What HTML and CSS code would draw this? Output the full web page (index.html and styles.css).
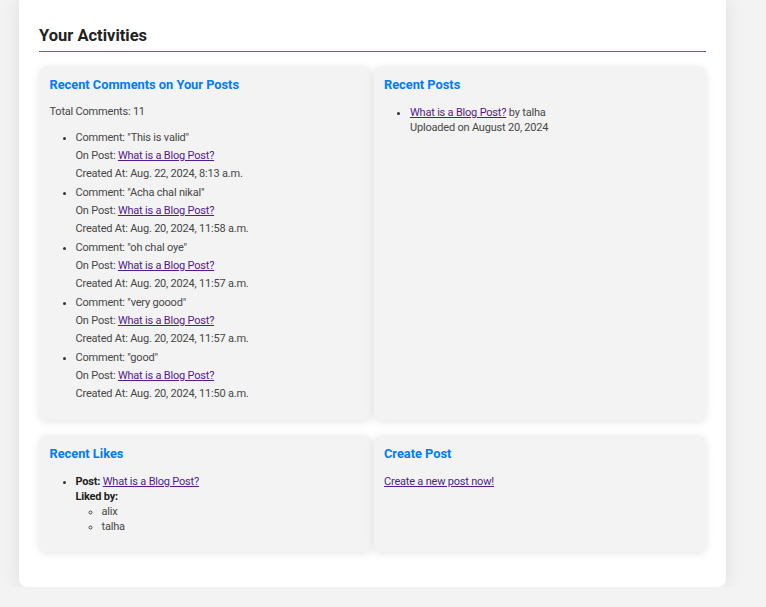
FILE: index.html
```html
<!DOCTYPE html>
<html lang="en">
<head>
<meta charset="utf-8">
<title>Your Activities</title>
<link rel="stylesheet" href="styles.css">
</head>
<body>
<main class="container">
  <h2 class="section-title">Your Activities</h2>
  <div class="activity-grid">
    <section class="card">
      <h3>Recent Comments on Your Posts</h3>
      <p class="total">Total Comments: 11</p>
      <ul class="comments">
        <li>Comment: "This is valid"<br>On Post: <a href="#">What is a Blog Post?</a><br>Created At: Aug. 22, 2024, 8:13 a.m.</li>
        <li>Comment: "Acha chal nikal"<br>On Post: <a href="#">What is a Blog Post?</a><br>Created At: Aug. 20, 2024, 11:58 a.m.</li>
        <li>Comment: "oh chal oye"<br>On Post: <a href="#">What is a Blog Post?</a><br>Created At: Aug. 20, 2024, 11:57 a.m.</li>
        <li>Comment: "very goood"<br>On Post: <a href="#">What is a Blog Post?</a><br>Created At: Aug. 20, 2024, 11:57 a.m.</li>
        <li>Comment: "good"<br>On Post: <a href="#">What is a Blog Post?</a><br>Created At: Aug. 20, 2024, 11:50 a.m.</li>
      </ul>
    </section>
    <section class="card">
      <h3>Recent Posts</h3>
      <ul class="list">
        <li><a href="#">What is a Blog Post?</a> by talha<br>Uploaded on August 20, 2024</li>
      </ul>
    </section>
    <section class="card">
      <h3>Recent Likes</h3>
      <ul class="list">
        <li><strong>Post:</strong> <a href="#">What is a Blog Post?</a><br><strong>Liked by:</strong>
          <ul class="sub">
            <li>alix</li>
            <li>talha</li>
          </ul>
        </li>
      </ul>
    </section>
    <section class="card">
      <h3>Create Post</h3>
      <p class="create"><a href="#">Create a new post now!</a></p>
    </section>
  </div>
</main>
</body>
</html>
```
FILE: styles.css
```css
html, body {
  margin: 0;
  padding: 0;
}
body {
  background: #f3f3f3;
  font-family: "Roboto", "Liberation Sans", sans-serif;
  font-size: 11px;
  letter-spacing: -0.2px;
  color: #474747;
}
.container {
  margin: 0 40px 0 19px;
  background: #ffffff;
  border-radius: 0 0 8px 8px;
  padding: 24px 20px 35px;
  box-shadow: 0 0 20px rgba(0, 0, 0, 0.09);
}
.section-title {
  margin: 0 0 14px;
  padding-bottom: 4px;
  font-size: 16.5px;
  line-height: 23px;
  font-weight: 700;
  letter-spacing: 0;
  color: #222222;
  border-bottom: 1px solid #1a73e8;
}
.activity-grid {
  display: grid;
  grid-template-columns: 1fr 1fr;
  gap: 15px 2px;
}
.card {
  background: #f3f3f3;
  border-radius: 8px;
  padding: 10px 10px 10px 10.5px;
  box-shadow: 0 2px 8px rgba(0, 0, 0, 0.1);
}
.card h3 {
  margin: 0 0 10px;
  font-size: 12.8px;
  line-height: 17px;
  font-weight: 700;
  letter-spacing: 0;
  color: #007bff;
}
.total {
  margin: 0 0 8px;
  line-height: 18px;
}
.comments {
  margin: 8px 0 7px;
  padding-left: 26px;
  line-height: 18px;
}
.comments li + li {
  margin-top: 1px;
}
.comments li::marker,
.list > li::marker {
  color: #333333;
}
.list {
  margin: 12px 0 8px;
  padding-left: 26px;
  line-height: 15px;
}
.sub {
  margin: 0;
  padding-left: 26px;
  list-style: circle;
}
.list strong {
  color: #222222;
}
.create {
  margin: 12px 0 8px;
  line-height: 15px;
}
a {
  color: #551a8b;
  text-decoration: underline;
}
```
